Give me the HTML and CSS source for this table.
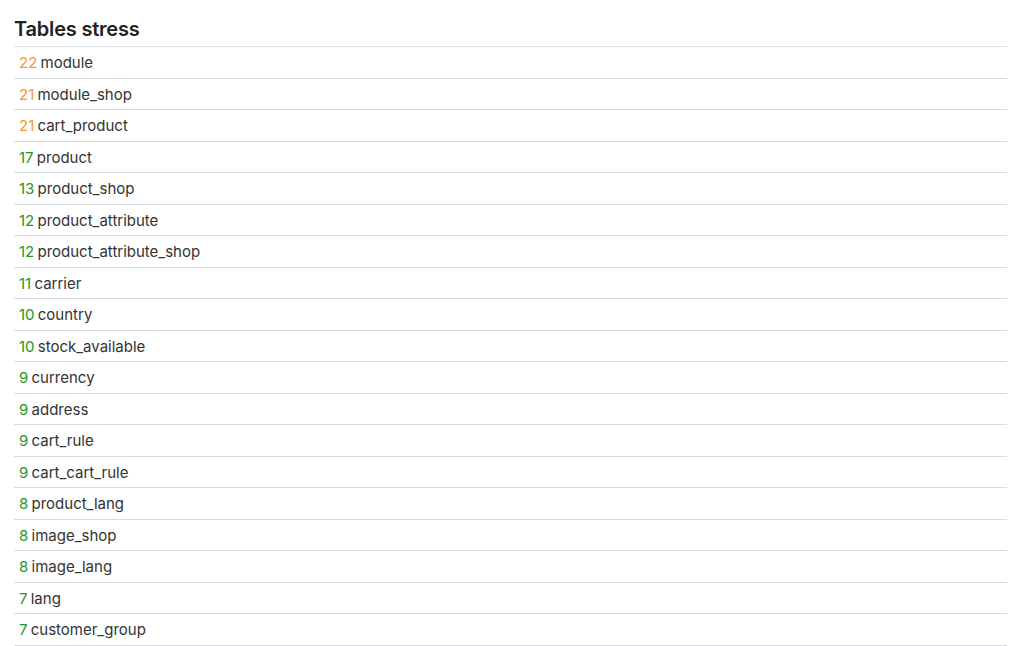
FILE: index.html
```html
<!DOCTYPE html>
<html lang="en">
<head>
  <meta charset="UTF-8" />
  <meta name="viewport" content="width=device-width, initial-scale=1.0"/>
  <title>Tables stress</title>
  <link rel="stylesheet" href="styles.css">
</head>
<body>
  <div class="panel">
    <h2>Tables stress</h2>
    <ul class="tables">
      <li><span class="count warn">22</span> module</li>
      <li><span class="count warn">21</span> module_shop</li>
      <li><span class="count warn">21</span> cart_product</li>
      <li><span class="count ok">17</span> product</li>
      <li><span class="count ok">13</span> product_shop</li>
      <li><span class="count ok">12</span> product_attribute</li>
      <li><span class="count ok">12</span> product_attribute_shop</li>
      <li><span class="count ok">11</span> carrier</li>
      <li><span class="count ok">10</span> country</li>
      <li><span class="count ok">10</span> stock_available</li>
      <li><span class="count ok">9</span> currency</li>
      <li><span class="count ok">9</span> address</li>
      <li><span class="count ok">9</span> cart_rule</li>
      <li><span class="count ok">9</span> cart_cart_rule</li>
      <li><span class="count ok">8</span> product_lang</li>
      <li><span class="count ok">8</span> image_shop</li>
      <li><span class="count ok">8</span> image_lang</li>
      <li><span class="count ok">7</span> lang</li>
      <li><span class="count ok">7</span> customer_group</li>
    </ul>
  </div>
</body>
</html>
```

FILE: styles.css
```css
body {
  margin: 0;
  background: #fff;
  font-family: Inter, "Noto Sans", sans-serif;
  color: #333;
}

.panel {
  padding: 17px 17px 0 14px;
}

.panel h2 {
  margin: 0 0 5px;
  font-size: 20px;
  line-height: 24px;
  font-weight: 600;
  letter-spacing: -0.2px;
  color: #222;
}

.tables {
  list-style: none;
  margin: 0;
  padding: 0;
  border-top: 1px solid #dbe3e7;
}

.tables li {
  padding: 5px 5px 3px;
  font-size: 15px;
  line-height: 22.5px;
  border-bottom: 1px solid #d3dde2;
}

.count {
  margin-right: -1px;
}

.count.warn {
  color: #f39a2b;
}

.count.ok {
  color: #27962a;
}
```
